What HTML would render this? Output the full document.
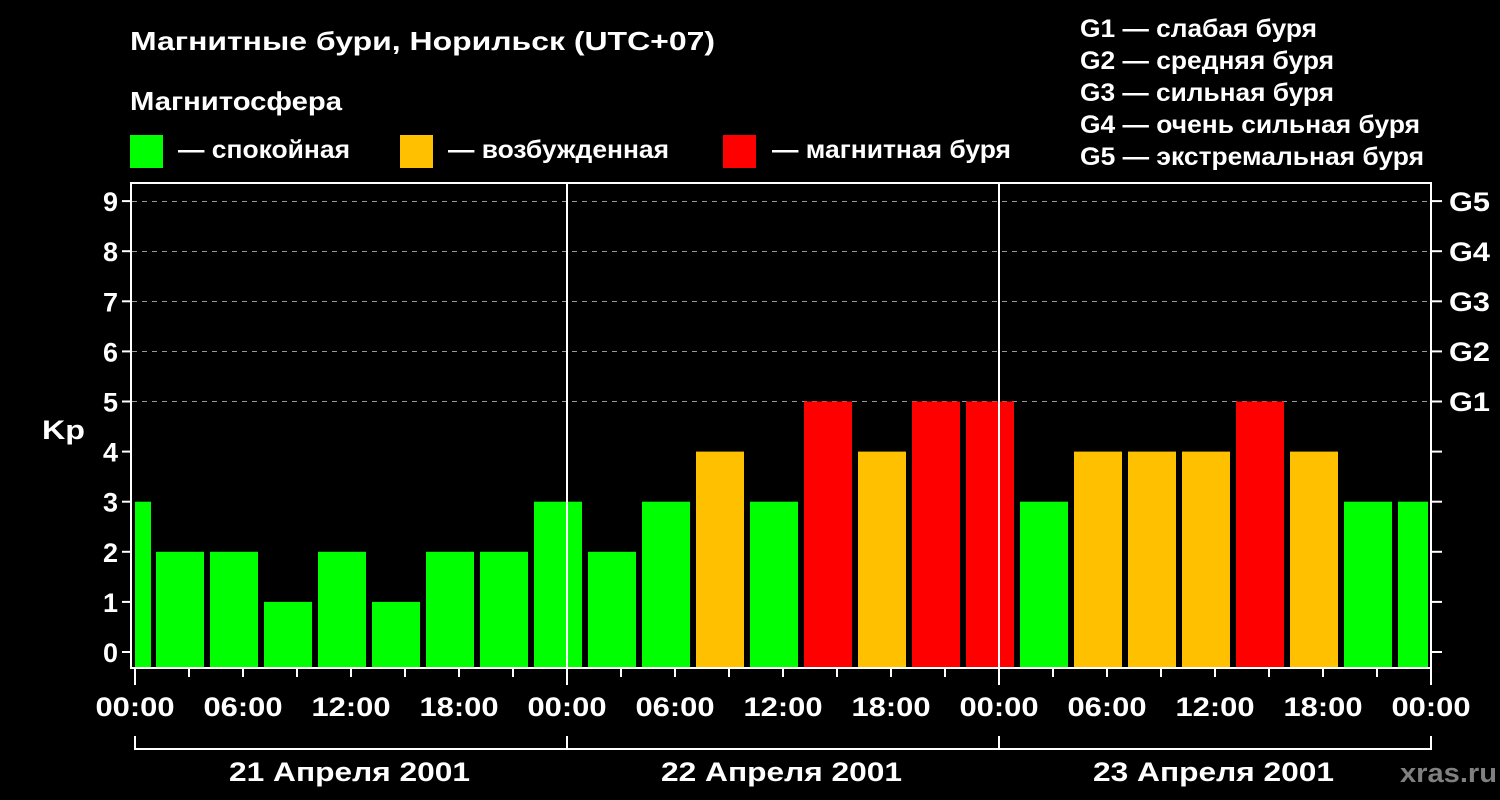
<!DOCTYPE html><html><head><meta charset="utf-8"><style>body{margin:0;background:#000;width:1500px;height:800px;overflow:hidden}svg{display:block}text{font-family:"Liberation Sans",sans-serif;font-weight:bold;fill:#fff}</style></head><body>
<svg width="1500" height="800" viewBox="0 0 1500 800">
<text x="130" y="50" font-size="26" textLength="585" lengthAdjust="spacingAndGlyphs">Магнитные бури, Норильск (UTC+07)</text>
<text x="130" y="110" font-size="26" textLength="212" lengthAdjust="spacingAndGlyphs">Магнитосфера</text>
<rect x="130" y="135" width="33" height="33" fill="#00ff00"/><text x="178" y="158" font-size="25" textLength="172" lengthAdjust="spacingAndGlyphs">— спокойная</text>
<rect x="400" y="135" width="33" height="33" fill="#ffc000"/><text x="448" y="158" font-size="25" textLength="221" lengthAdjust="spacingAndGlyphs">— возбужденная</text>
<rect x="723" y="135" width="33" height="33" fill="#ff0000"/><text x="772" y="158" font-size="25" textLength="239" lengthAdjust="spacingAndGlyphs">— магнитная буря</text>
<g font-size="25"><text x="1080" y="37" textLength="237" lengthAdjust="spacingAndGlyphs">G1 — слабая буря</text><text x="1080" y="69" textLength="254" lengthAdjust="spacingAndGlyphs">G2 — средняя буря</text><text x="1080" y="101" textLength="254" lengthAdjust="spacingAndGlyphs">G3 — сильная буря</text><text x="1080" y="133" textLength="340" lengthAdjust="spacingAndGlyphs">G4 — очень сильная буря</text><text x="1080" y="165" textLength="344" lengthAdjust="spacingAndGlyphs">G5 — экстремальная буря</text></g>
<g stroke="#999" stroke-width="1" stroke-dasharray="5,5">
<line x1="132" x2="1431" y1="201.5" y2="201.5"/><line x1="132" x2="1431" y1="251.5" y2="251.5"/><line x1="132" x2="1431" y1="301.5" y2="301.5"/><line x1="132" x2="1431" y1="351.5" y2="351.5"/><line x1="132" x2="1431" y1="401.5" y2="401.5"/></g>
<g id="bars"></g>
<g stroke="#fff" stroke-width="2" fill="none">
<rect x="131" y="183" width="1300" height="485"/>
<line x1="567" y1="183" x2="567" y2="668"/><line x1="999" y1="183" x2="999" y2="668"/>
<path d="M135 736V749H1431V736M567 736V749M999 736V749"/>
</g>
<g id="ticks" stroke="#fff" stroke-width="2"></g>
<g font-size="27" text-anchor="end" id="yl"></g>
<g font-size="27"><text x="1449" y="211" textLength="41" lengthAdjust="spacingAndGlyphs">G5</text><text x="1449" y="261" textLength="41" lengthAdjust="spacingAndGlyphs">G4</text><text x="1449" y="311" textLength="41" lengthAdjust="spacingAndGlyphs">G3</text><text x="1449" y="361" textLength="41" lengthAdjust="spacingAndGlyphs">G2</text><text x="1449" y="411" textLength="41" lengthAdjust="spacingAndGlyphs">G1</text></g>
<text x="42" y="439" font-size="27" textLength="43" lengthAdjust="spacingAndGlyphs">Kp</text>
<g font-size="27" id="xl"></g>
<g font-size="27"><text x="229" y="781" textLength="241" lengthAdjust="spacingAndGlyphs">21 Апреля 2001</text><text x="661" y="781" textLength="241" lengthAdjust="spacingAndGlyphs">22 Апреля 2001</text><text x="1093" y="781" textLength="241" lengthAdjust="spacingAndGlyphs">23 Апреля 2001</text></g>
<text x="1400" y="782" font-size="27" style="fill:#808080" textLength="97" lengthAdjust="spacingAndGlyphs">xras.ru</text>
</svg>
<script>
var ns="http://www.w3.org/2000/svg";function el(p,t,a,tx){var e=document.createElementNS(ns,t);for(var k in a)e.setAttribute(k,a[k]);if(tx)e.textContent=tx;document.getElementById(p).appendChild(e);}
var C=["#00ff00","#00ff00","#00ff00","#00ff00","#ffc000","#ff0000"];
function bar(x,w,v){var y=652-50.1*v;el("bars","rect",{x:x,y:y,width:w,height:668-y,fill:C[v]});}
bar(135,16,3);
var V=[2,2,1,2,1,2,2,3,2,3,4,3,5,4,5,5,3,4,4,4,5,4,3,3];
V.forEach(function(v,i){var x=156+54*i;bar(x,i==23?30:48,v);});
for(var k=0;k<=9;k++){var y=652-50.1*k;el("ticks","line",{x1:122,x2:131,y1:y,y2:y});el("ticks","line",{x1:1431,x2:1442,y1:y,y2:y});el("yl","text",{x:118,y:y+10},""+k);}
var L=["00:00","06:00","12:00","18:00"];
for(var i=0;i<=24;i++){var x=135+54*i;el("ticks","line",{x1:x,x2:x,y1:668,y2:i%8==0?685:677});if(i%2==0)el("xl","text",{x:x-39.5,y:716,textLength:79,lengthAdjust:"spacingAndGlyphs"},L[(i/2)%4]);}
</script>
</body></html>
